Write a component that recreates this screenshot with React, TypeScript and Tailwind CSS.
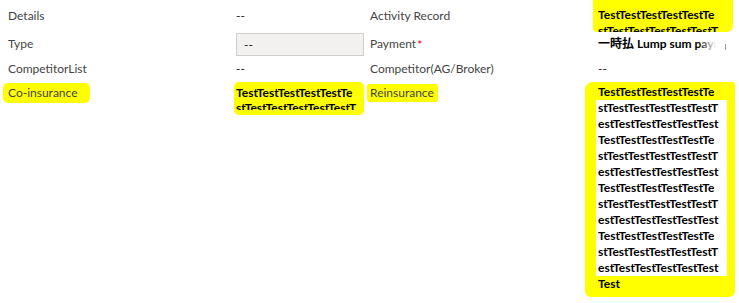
import React from "react";

const LINES_A = "TestTestTestTestTestTe";
const LINES_B = "stTestTestTestTestTestT";
const LINES_C = "estTestTestTestTestTest";

const Label = ({ children, className = "" }: { children: React.ReactNode; className?: string }) => (
  <div className={`text-[12px] leading-[16px] text-[#444444] ${className}`}>{children}</div>
);

export default function App() {
  const middle: string[] = [];
  for (let i = 0; i < 4; i++) {
    if (i === 0) {
      middle.push(LINES_B, LINES_C);
    } else {
      middle.push(LINES_A, LINES_B, LINES_C);
    }
  }
  return (
    <div
      className="w-[739px] h-[303px] bg-white overflow-hidden pl-[8px]"
      style={{ fontFamily: "Lato, 'Noto Sans CJK JP', sans-serif" }}
    >
      {/* Row 1 */}
      <div className="flex h-[32px]">
        <div className="w-[228px] pt-[8px]">
          <Label>Details</Label>
        </div>
        <div className="w-[134px] pt-[8px] text-[12px] leading-[16px] text-[#222]">--</div>
        <div className="w-[228px] pt-[8px]">
          <Label>Activity Record</Label>
        </div>
        <div className="w-[140px] -ml-[5px] pl-[5px] pr-[8px] bg-[#ffff00] rounded-br-[6px] rounded-bl-[4px]">
          <div className="h-[32px] pt-[7px] overflow-hidden text-[12px] leading-[16px] font-bold text-black whitespace-nowrap">
            <div className="w-[128px] overflow-hidden">{LINES_A}</div>
            <div className="w-[128px] overflow-hidden">{LINES_B}</div>
          </div>
        </div>
      </div>

      {/* Row 2 */}
      <div className="flex h-[26px]">
        <div className="w-[228px] pt-[4px]">
          <Label>Type</Label>
        </div>
        <div className="w-[134px] pt-[1px]">
          <div className="w-[128px] h-[23px] border border-[#cfcfcf] bg-[#f2f1f0] pl-[7px] text-[12px] leading-[21px] text-[#222]">
            --
          </div>
        </div>
        <div className="w-[228px] pt-[4px]">
          <Label>
            Payment<sup className="text-[#cc0000] text-[12px] ml-[1px] relative top-[1px]">*</sup>
          </Label>
        </div>
        <div className="w-[130px] pt-[4px] relative flex items-start">
          <div className="w-[118px] overflow-hidden whitespace-nowrap text-[12px] leading-[16px] font-bold text-black">
            一時払 Lump sum payment
          </div>
          <div className="absolute left-[100px] top-[2px] w-[18px] h-[18px] bg-gradient-to-r from-white/0 to-white" />
          <div className="ml-[9px] mt-[8px] w-[1px] h-[6px] bg-[#9a9a9a]" />
        </div>
      </div>

      {/* Row 3 */}
      <div className="flex h-[22px]">
        <div className="w-[228px] pt-[3px]">
          <Label>CompetitorList</Label>
        </div>
        <div className="w-[134px] pt-[3px] text-[12px] leading-[16px] text-[#222]">--</div>
        <div className="w-[228px] pt-[3px]">
          <Label>Competitor(AG/Broker)</Label>
        </div>
        <div className="w-[130px] pt-[3px] text-[12px] leading-[16px] text-[#222]">--</div>
      </div>

      {/* Row 4 */}
      <div className="flex items-start">
        <div className="w-[228px] pt-[3px] flex items-start">
          <div className="-ml-[5px] pl-[5px] pr-[12px] py-[2px] bg-[#ffff00] rounded-[5px]">
            <Label className="text-[#333]">Co-insurance</Label>
          </div>
        </div>
        <div className="w-[134px] pt-[2px] flex items-start">
          <div className="-ml-[2px] w-[130px] h-[33px] pl-[2px] pt-[3px] bg-[#ffff00] rounded-[5px] overflow-hidden">
            <div className="h-[25px] overflow-hidden text-[12px] leading-[15px] font-bold text-black whitespace-nowrap">
              <div className="w-[127px] overflow-hidden">{LINES_A}</div>
              <div className="w-[127px] overflow-hidden">{LINES_B}</div>
            </div>
          </div>
        </div>
        <div className="w-[228px] pt-[4px] flex items-start">
          <div className="-ml-[3px] pl-[3px] pr-[4px] py-[1px] bg-[#ffff00] rounded-[3px]">
            <Label className="text-[#333]">Reinsurance</Label>
          </div>
        </div>
        <div className="pt-[2px]">
          <div className="-ml-[13px] w-[150px] bg-[#ffff00] rounded-tl-[8px] rounded-tr-[3px] rounded-b-[6px] pl-[11px] pr-[6px] pt-[2px] pb-[5px]">
            <div className="text-[12px] leading-[16px] font-bold text-black whitespace-nowrap">
              <div className="w-[133px] pl-[2px] overflow-hidden">{LINES_A}</div>
              <div className="bg-white w-[131px] pl-[2px]">
                {middle.map((l, i) => (
                  <div key={i} className="w-[129px] overflow-hidden">
                    {l}
                  </div>
                ))}
              </div>
              <div className="pl-[2px]">Test</div>
            </div>
          </div>
        </div>
      </div>
    </div>
  );
}
